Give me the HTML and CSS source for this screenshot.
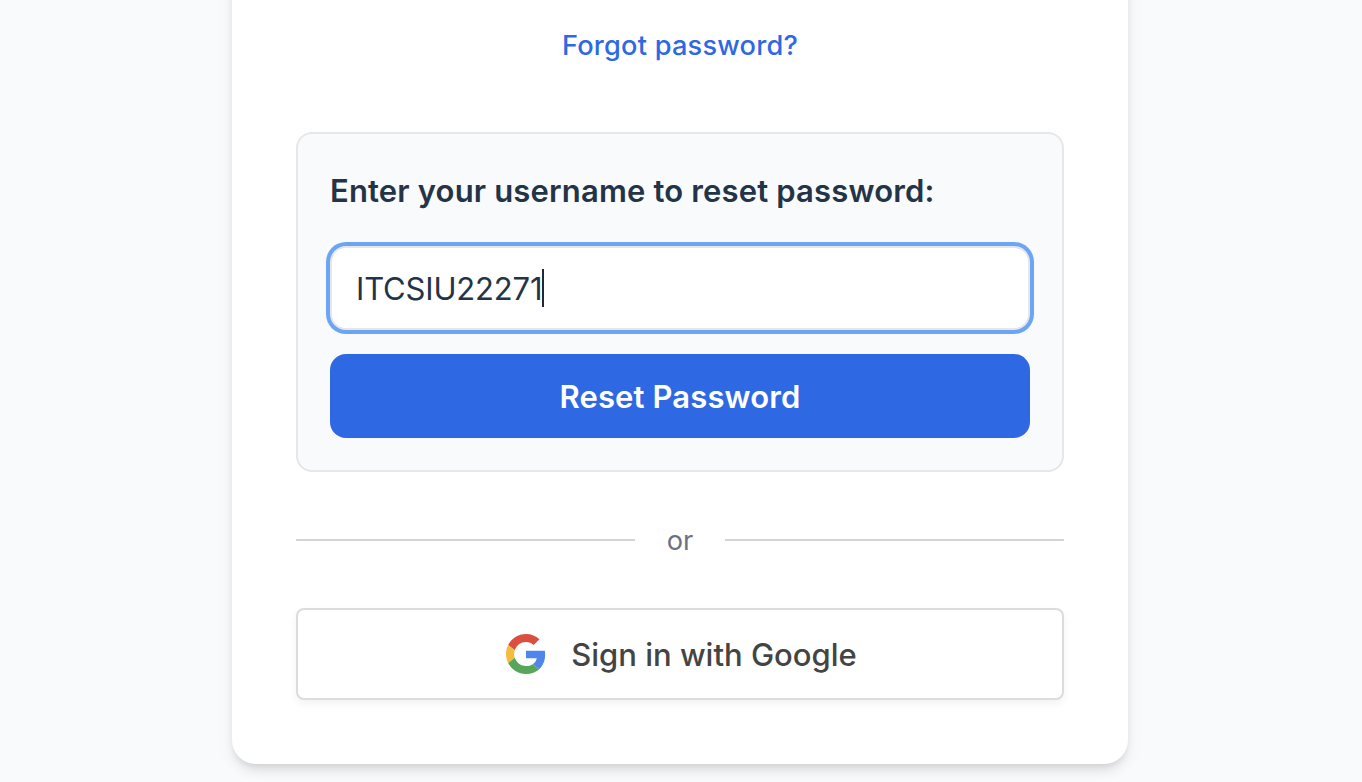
FILE: index.html
```html
<!DOCTYPE html>
<html lang="en">
<head>
<meta charset="utf-8">
<title>Sign in</title>
<link rel="stylesheet" href="styles.css">
</head>
<body>
<main class="card">
  <a class="forgot"><span class="forgot-text">Forgot password?</span></a>
  <section class="reset">
    <label class="reset-label"><span class="label-text">Enter your username to reset password:</span></label>
    <div class="field"><span class="field-text">ITCSIU22271</span><span class="caret"></span></div>
    <button class="submit"><span class="submit-text">Reset Password</span></button>
  </section>
  <div class="divider"><span class="line"></span><span class="or">or</span><span class="line"></span></div>
  <button class="google">
    <svg class="google-icon" viewBox="0 0 48 48">
      <path fill="#db4f40" d="M24 9.5c3.54 0 6.71 1.22 9.21 3.6l6.85-6.85C35.9 2.38 30.47 0 24 0 14.62 0 6.51 5.38 2.56 13.22l7.98 6.19C12.43 13.72 17.74 9.5 24 9.5z"/>
      <path fill="#4f86ec" d="M46.98 24.55c0-1.57-.15-3.09-.38-4.55H24v9.02h12.94c-.58 2.96-2.26 5.48-4.78 7.18l7.73 6c4.51-4.18 7.09-10.36 7.09-17.65z"/>
      <path fill="#f3bd42" d="M10.53 28.59c-.48-1.45-.76-2.99-.76-4.59s.27-3.14.76-4.59l-7.98-6.19C.92 16.46 0 20.12 0 24c0 3.88.92 7.54 2.56 10.78l7.97-6.19z"/>
      <path fill="#58a55c" d="M24 48c6.48 0 11.93-2.13 15.89-5.81l-7.73-6c-2.15 1.45-4.92 2.3-8.16 2.3-6.26 0-11.57-4.22-13.47-9.91l-7.98 6.19C6.51 42.62 14.62 48 24 48z"/>
    </svg>
    <span class="google-text">Sign in with Google</span>
  </button>
</main>
</body>
</html>
```
FILE: styles.css
```css
* { box-sizing: border-box; }
body {
  display: flex;
  flex-direction: column;
  margin: 0;
  height: 782px;
  overflow: hidden;
  background: #f9fafc;
  font-family: Inter, "Liberation Sans", sans-serif;
  color: #243447;
}
.card {
  display: flex;
  flex-direction: column;
  flex-shrink: 0;
  width: 896px;
  height: 804px;
  margin: -40px 0 0 232px;
  padding: 64px 64px 0;
  background: #fff;
  border-radius: 24px;
  box-shadow: 0 8px 12px -2px rgba(0,0,0,.1), 0 4px 8px -4px rgba(0,0,0,.1), 0 4px 24px rgba(0,0,0,.03);
}
.forgot {
  height: 40px;
  line-height: 43px;
  text-align: center;
  font-size: 27.2px;
  letter-spacing: .21px;
  font-weight: 500;
  color: #2f68e3;
}
.reset {
  height: 340px;
  margin-top: 68px;
  padding: 32px;
  background: #f9fafc;
  border: 2px solid #e5e7eb;
  border-radius: 16px;
}
.reset-label {
  display: block;
  height: 48px;
  line-height: 49px;
  font-size: 31px;
  letter-spacing: .16px;
  font-weight: 600;
  white-space: nowrap;
}
.field {
  display: flex;
  align-items: center;
  height: 84px;
  margin-top: 32px;
  padding-left: 24px;
  background: #fff;
  border: 2px solid #e5e7eb;
  border-radius: 16px;
  box-shadow: 0 0 0 4px #6da5f5;
  font-size: 31px;
}
.field-text { letter-spacing: -.17px; }
.caret { width: 2px; height: 38px; background: #1f2937; }
.submit {
  display: block;
  width: 100%;
  height: 84px;
  margin-top: 24px;
  padding: 0;
  border: 0;
  border-radius: 16px;
  background: #2f68e3;
  color: #fff;
  font: 600 31px Inter, sans-serif;
  letter-spacing: .12px;
}
.divider {
  display: flex;
  align-items: center;
  gap: 32px;
  height: 40px;
  margin-top: 48px;
}
.line { flex: 1; height: 2px; background: #d1d5db; }
.or { padding-top: 1px; font-size: 27.2px; line-height: 40px; color: #6b7280; }
.google {
  display: flex;
  align-items: center;
  justify-content: center;
  gap: 25px;
  height: 92px;
  margin-top: 48px;
  padding: 0 0 0 3px;
  background: #fff;
  border: 2px solid #dcdcdc;
  border-radius: 8px;
  box-shadow: 0 4px 8px rgba(0,0,0,.05);
  color: #444;
  font: 500 31px Inter, sans-serif;
}
.google-icon { width: 40px; height: 40px; }
```
